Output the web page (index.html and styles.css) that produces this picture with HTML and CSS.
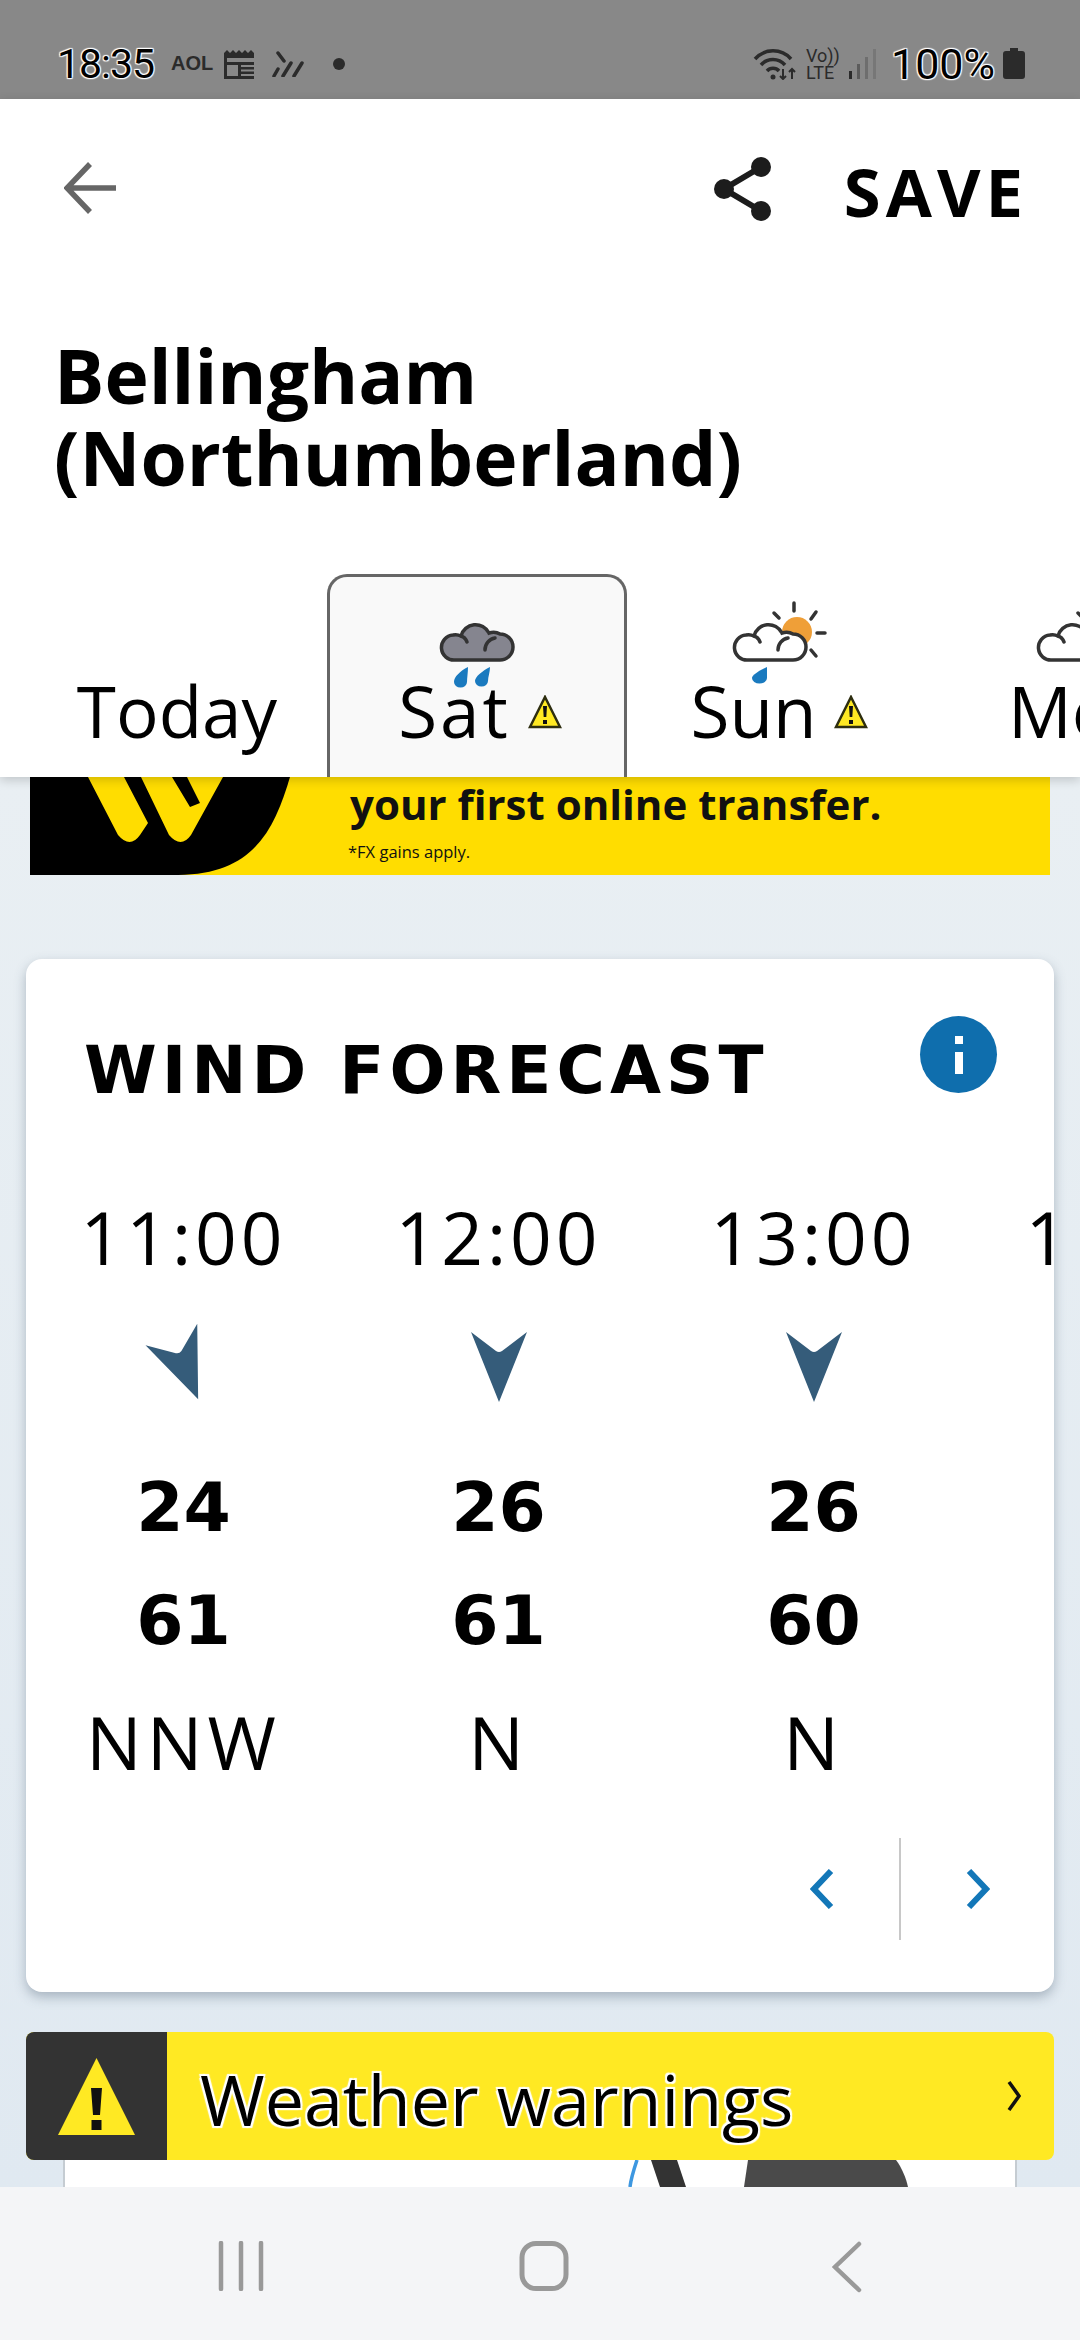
FILE: index.html
```html
<!DOCTYPE html>
<html>
<head>
<title>Wind forecast</title>
<link rel="stylesheet" href="styles.css">
</head>
<body>

<div class="status">
    <div class="status-group">
        <span class="clock">18:35</span>
        <span class="aol">AOL</span>
        <svg class="st-news" viewBox="0 0 33 30"><path d="M0 4 l3-3 3 3 3-3 3 3 3-3 3 3 3-3 3 3 3-3 3 3 V30 H0 Z" fill="#2b2b2b"/><rect x="3" y="9" width="27" height="4" fill="#888"/><rect x="3" y="16" width="11" height="11" fill="#888"/><path d="M17 17h13M17 21.500h13M17 26h13" stroke="#888" stroke-width="2"/></svg>
        <svg class="st-lines" viewBox="0 0 32 26"><path d="M6 2l6 8M2 25l4-7M11 25l8-13M22 25l8-13" stroke="#2b2b2b" stroke-width="3.500" stroke-linecap="round" fill="none"/></svg>
        <span class="st-dot"></span>
    </div>
    <div class="status-group">
        <svg class="st-wifi" viewBox="0 0 44 32"><path d="M2 11a24 24 0 0 1 36 0M8 17a16 16 0 0 1 24 0M14 23a8 8 0 0 1 12 0" stroke="#2b2b2b" stroke-width="3.500" fill="none"/><circle cx="20" cy="29" r="2.500" fill="#2b2b2b"/><path d="M30 21v10M27 28l3 3 3-3M39 31V21M36 24l3-3 3 3" stroke="#2b2b2b" stroke-width="2" fill="none"/></svg>
        <span class="volte">Vo))<br>LTE</span>
        <svg class="st-signal" viewBox="0 0 27 30"><rect x="0" y="22" width="3" height="8" fill="#2b2b2b"/><rect x="8" y="15" width="3" height="15" fill="#5c5c5c"/><rect x="16" y="8" width="3" height="22" fill="#6e6e6e"/><rect x="24" y="0" width="3" height="30" fill="#777"/></svg>
        <span class="battery-pct">100%</span>
        <svg class="st-battery" viewBox="0 0 22 31"><path d="M7 0h8v3h4a3 3 0 0 1 3 3v22a3 3 0 0 1-3 3H3a3 3 0 0 1-3-3V6a3 3 0 0 1 3-3h4z" fill="#2b2b2b"/></svg>
    </div>
</div>

<div class="top">
    <div class="actions">
        <svg class="back" viewBox="0 0 52 52"><path d="M26 2L3 26l23 24M3 26h49" stroke="#666" stroke-width="5.500" fill="none"/></svg>
        <div class="actions-right">
            <svg class="share" viewBox="0 0 58 64"><path d="M47 10L10 32l37 22" stroke="#1c1c1c" stroke-width="6" fill="none"/><circle cx="47" cy="10" r="10" fill="#1c1c1c"/><circle cx="10" cy="32" r="10" fill="#1c1c1c"/><circle cx="47" cy="54" r="10" fill="#1c1c1c"/></svg>
            <span class="save">SAVE</span>
        </div>
    </div>
    <h1 class="place">Bellingham<br>(Northumberland)</h1>
    <div class="tabs">
        <div class="tab tab-today"><span class="tab-label">Today</span></div>
        <div class="tab tab-active">
            <svg class="tab-icon" viewBox="0 0 114 90"><g transform="translate(9 0)"><path d="M26 60A12.500 12.500 0 0 1 24 35Q28 34 32 36A15 15 0 0 1 60 33Q66 31 71 34A13 13 0 0 1 71 60z" fill="#85858f" stroke="#333" stroke-width="3.500"/><path d="M32 36Q36 37 38 42M56 50A12 12 0 0 1 66 38" stroke="#333" stroke-width="3.500" fill="none" stroke-linecap="round"/></g><path d="M48 67C40 71 34 77 34 82a6.500 5.500 0 0 0 13 0C47 78 48 72 48 67zM70 67C62 71 55 77 55 81a6.500 5.500 0 0 0 13 0C68 77 70 72 70 67z" fill="#1a7abf"/></svg>
            <span class="tab-label">Sat</span>
            <svg class="tab-warn" viewBox="0 0 34 34"><path d="M17 2L32 32H2z" fill="#ffe923" stroke="#2e2e10" stroke-width="2.500"/><path d="M15 11h4l-.7 11h-2.600zM15 25h4v4h-4z" fill="#111"/></svg>
        </div>
        <div class="tab tab-sun">
            <svg class="tab-icon" viewBox="0 0 114 90"><circle cx="75" cy="32" r="15" fill="#ef9f38"/><path d="M72 3v8M52 13l5 5M94 12l-5 7M95 33h8M89 50l5 6" stroke="#333" stroke-width="3.500" stroke-linecap="round" fill="none"/><path d="M26 60A12.500 12.500 0 0 1 24 35Q28 34 32 36A15 15 0 0 1 60 33Q66 31 71 34A13 13 0 0 1 71 60z" fill="#fff" stroke="#333" stroke-width="3.500"/><path d="M32 36Q36 37 38 42M56 50A12 12 0 0 1 66 38" stroke="#333" stroke-width="3.500" fill="none" stroke-linecap="round"/><path d="M45 67C36 71 30 75 30 78a7.500 5.500 0 0 0 15 0C45 74 45 71 45 67z" fill="#1a7abf"/></svg>
            <span class="tab-label">Sun</span>
            <svg class="tab-warn" viewBox="0 0 34 34"><path d="M17 2L32 32H2z" fill="#ffe923" stroke="#2e2e10" stroke-width="2.500"/><path d="M15 11h4l-.7 11h-2.600zM15 25h4v4h-4z" fill="#111"/></svg>
        </div>
        <div class="tab tab-mon">
            <svg class="tab-icon" viewBox="0 0 114 90"><path d="M52 13l5 5" stroke="#333" stroke-width="3.500" stroke-linecap="round"/><path d="M26 60A12.500 12.500 0 0 1 24 35Q28 34 32 36A15 15 0 0 1 60 33Q66 31 71 34A13 13 0 0 1 71 60z" fill="#fff" stroke="#333" stroke-width="3.500"/><path d="M32 36Q36 37 38 42M56 50A12 12 0 0 1 66 38" stroke="#333" stroke-width="3.500" fill="none" stroke-linecap="round"/></svg>
            <span class="tab-label">Mon</span>
        </div>
    </div>
</div>

<div class="main">
    <div class="ad">
        <svg class="ad-logo" viewBox="0 0 270 98"><path d="M0 0H260C245 50 225 98 148 98H0z" fill="#000"/><path d="M58 0L88 58Q100 72 110 58L118 46 94 0zM111 0L139 58Q151 72 161 58L193 0H157L170 26 160 30 142 0z" fill="#ffdd00"/></svg>
        <div class="ad-text">
            <div class="ad-headline">your first online transfer.</div>
            <div class="ad-small">*FX gains apply.</div>
        </div>
    </div>

    <div class="card">
        <div class="card-head">
            <h2 class="card-title">WIND FORECAST</h2>
            <div class="info"><span class="info-dot"></span><span class="info-stem"></span></div>
        </div>
        <div class="hours">
            <div class="hour">
                <div class="hour-time">11:00</div>
                <svg class="wind-arrow" viewBox="-40 -45 80 90"><path d="M-28-33L-3-14Q0-12 3-14L28-33 0 37z" transform="rotate(-22.500)" fill="#355c7a"/></svg>
                <div class="hour-num">24</div>
                <div class="hour-num">61</div>
                <div class="hour-dir">NNW</div>
            </div>
            <div class="hour">
                <div class="hour-time">12:00</div>
                <svg class="wind-arrow" viewBox="-40 -45 80 90"><path d="M-28-33L-3-14Q0-12 3-14L28-33 0 37z" fill="#355c7a"/></svg>
                <div class="hour-num">26</div>
                <div class="hour-num">61</div>
                <div class="hour-dir">N</div>
            </div>
            <div class="hour">
                <div class="hour-time">13:00</div>
                <svg class="wind-arrow" viewBox="-40 -45 80 90"><path d="M-28-33L-3-14Q0-12 3-14L28-33 0 37z" fill="#355c7a"/></svg>
                <div class="hour-num">26</div>
                <div class="hour-num">60</div>
                <div class="hour-dir">N</div>
            </div>
            <div class="hour">
                <div class="hour-time">14:00</div>
            </div>
        </div>
        <div class="pager">
            <svg class="pager-btn" viewBox="0 0 24 40"><path d="M21 2L4 20l17 18" stroke="#1377b8" stroke-width="6" fill="none"/></svg>
            <span class="pager-line"></span>
            <svg class="pager-btn" viewBox="0 0 24 40"><path d="M3 2l17 18L3 38" stroke="#1377b8" stroke-width="6" fill="none"/></svg>
        </div>
    </div>

    <div class="warnings">
        <div class="warnings-icon">
            <svg viewBox="0 0 77 77"><path d="M38.500 0L77 77H0z" fill="#ffe923"/><path d="M33 30h11l-2 27h-7zM33.500 62h10v10h-10z" fill="#111"/></svg>
        </div>
        <div class="warnings-text">Weather warnings</div>
        <svg class="warnings-arrow" viewBox="0 0 14 30"><path d="M2 1l10 14L2 29" stroke="#111" stroke-width="3.500" fill="none"/></svg>
    </div>

    <div class="next-card">
        <svg viewBox="0 0 950 27"><path d="M572 0C569 9 566 18 565 27" stroke="#3d97e0" stroke-width="3.500" fill="none"/><path d="M586 0h26l9 27h-26z" fill="#333"/><path d="M683 0h148c6 8 10 18 12 27H679z" fill="#4a4a4a"/></svg>
    </div>
</div>

<div class="navbar">
    <svg class="nav-recent" viewBox="0 0 46 50"><path d="M3 2v46M23 2v46M43 2v46" stroke="#999" stroke-width="4.500" stroke-linecap="round"/></svg>
    <svg class="nav-home" viewBox="0 0 50 50"><rect x="3" y="2.500" width="44" height="45" rx="14" stroke="#999" stroke-width="5" fill="none"/></svg>
    <svg class="nav-back" viewBox="0 0 30 52"><path d="M27 3L3 26l24 23" stroke="#999" stroke-width="4.500" stroke-linecap="round" fill="none"/></svg>
</div>

</body>
</html>
```

FILE: styles.css
```css
* {
    box-sizing: border-box;
}
body {
    margin: 0;
    width: 1080px;
    height: 2340px;
    overflow: hidden;
    display: flex;
    flex-direction: column;
    font-family: "Open Sans", "Noto Sans", sans-serif;
    color: #000;
    background: #e8eef2;
}

/* phone status bar */
.status {
    height: 99px;
    flex: none;
    background: #888;
    display: flex;
    justify-content: space-between;
    align-items: center;
    padding: 28px 55px 0 57px;
}
.status-group {
    display: flex;
    align-items: center;
}
.clock, .battery-pct {
    font-family: Roboto, sans-serif;
    color: #000;
    text-shadow: 0 0 2px #fff, 1px 1px 1px #fff, -1px -1px 1px #fff, 1px -1px 1px #fff, -1px 1px 1px #fff;
}
.clock {
    font-size: 41px;
    letter-spacing: -1px;
}
.battery-pct {
    margin-left: 15px;
    font-size: 43px;
}
.aol {
    margin-left: 17px;
    font-family: "Liberation Sans", sans-serif;
    font-weight: 700;
    font-size: 20px;
    color: #2b2b2b;
}
.st-news {
    width: 33px;
    height: 30px;
    margin-left: 11px;
}
.st-lines {
    width: 32px;
    height: 26px;
    margin-left: 15px;
}
.st-dot {
    width: 12px;
    height: 12px;
    margin-left: 29px;
    border-radius: 50%;
    background: #2b2b2b;
}
.st-wifi {
    width: 44px;
    height: 32px;
}
.volte {
    margin-left: 9px;
    font-family: Roboto, sans-serif;
    font-size: 18px;
    line-height: 17px;
    color: #2b2b2b;
    width: 32px;
}
.st-signal {
    width: 27px;
    height: 30px;
    margin-left: 11px;
}
.st-battery {
    width: 22px;
    height: 31px;
    margin-left: 8px;
}

/* header with title and day tabs */
.top {
    flex: none;
    background: #fff;
    position: relative;
    z-index: 2;
    box-shadow: 0 3px 10px rgba(0, 0, 0, 0.18);
}
.actions {
    height: 178px;
    display: flex;
    justify-content: space-between;
    align-items: center;
    padding: 0 52px 0 64px;
}
.back {
    width: 52px;
    height: 52px;
}
.actions-right {
    display: flex;
    align-items: center;
    gap: 72px;
}
.share {
    width: 58px;
    height: 64px;
    margin-top: 2px;
}
.save {
    margin-top: 6px;
    font-weight: 700;
    font-size: 67px;
    line-height: 1;
    letter-spacing: 5px;
}
.place {
    margin: 57px 0 0;
    padding-left: 54px;
    font-size: 75px;
    line-height: 82px;
    font-weight: 700;
}
.tabs {
    margin-top: 76px;
    height: 203px;
    display: flex;
    align-items: stretch;
    padding-left: 27px;
    overflow: hidden;
}
.tab {
    flex: 0 0 300px;
    position: relative;
    display: flex;
    justify-content: center;
    align-items: flex-end;
    padding-bottom: 18px;
}
.tab-active {
    background: #f9f9f9;
    border: 3px solid #666;
    border-bottom: none;
    border-radius: 20px 20px 0 0;
}
.tab-sun {
    flex-basis: 304px;
}
.tab-mon {
    flex-basis: 304px;
}
.tab-label {
    font-size: 71px;
    line-height: 96px;
}
.tab-active .tab-label {
    margin-left: 6px;
    letter-spacing: 3px;
}
.tab-warn {
    width: 34px;
    height: 34px;
    margin: 0 0 30px 17px;
}
.tab-icon {
    position: absolute;
    top: 26px;
    left: 50%;
    width: 114px;
    height: 90px;
    margin-left: -57px;
}
.tab-active .tab-icon {
    top: 23px;
}

/* scrolled page content */
.main {
    flex: 1;
    min-height: 0;
    overflow: hidden;
    background: linear-gradient(#e9eff3, #e0e9f1);
}
.ad {
    margin: 0 30px;
    height: 98px;
    background: #ffdd00;
    display: flex;
}
.ad-logo {
    width: 270px;
    height: 98px;
    flex: none;
}
.ad-text {
    margin-left: 50px;
}
.ad-headline {
    font-size: 42px;
    line-height: 54px;
    font-weight: 700;
    color: #111;
}
.ad-small {
    margin: 10px 0 0 -2px;
    font-size: 16.500px;
    line-height: 22px;
    color: #111;
}
.card {
    margin: 84px 26px 0;
    height: 1033px;
    background: #fff;
    border-radius: 16px;
    box-shadow: 0 5px 12px rgba(60, 80, 100, 0.35);
    overflow: hidden;
}
.card-head {
    display: flex;
    justify-content: space-between;
    align-items: flex-start;
    padding: 57px 57px 0 58px;
}
.card-title {
    margin: 10px 0 0;
    font-family: "DejaVu Sans", sans-serif;
    font-size: 66px;
    line-height: 90px;
    font-weight: 700;
    letter-spacing: 5px;
}
.info {
    width: 77px;
    height: 77px;
    border-radius: 50%;
    background: #0f6ead;
    display: flex;
    flex-direction: column;
    align-items: center;
    padding-top: 20px;
    gap: 8px;
}
.info-dot {
    width: 8px;
    height: 8px;
    background: #fff;
}
.info-stem {
    width: 8px;
    height: 22px;
    background: #fff;
}
.hours {
    margin-top: 71px;
    display: flex;
    width: 1400px;
}
.hour {
    flex: 0 0 315px;
    text-align: center;
}
.hour-time {
    font-size: 73px;
    line-height: 100px;
    letter-spacing: 4px;
}
.wind-arrow {
    display: block;
    width: 80px;
    height: 90px;
    margin: 33px auto 0;
}
.hour-num {
    font-family: "DejaVu Sans", sans-serif;
    font-size: 68px;
    line-height: 113px;
    font-weight: 700;
}
.wind-arrow + .hour-num {
    margin-top: 41px;
}
.hour-dir {
    font-size: 74px;
    line-height: 100px;
    letter-spacing: 5px;
    margin-top: 15px;
}
.pager {
    margin-top: 46px;
    height: 102px;
    display: flex;
    justify-content: flex-end;
    align-items: center;
    padding-right: 64px;
}
.pager-btn {
    width: 24px;
    height: 40px;
}
.pager-line {
    width: 2px;
    height: 102px;
    background: #c8c8c8;
    margin: 0 65px;
}
.warnings {
    margin: 40px 26px 0;
    height: 128px;
    background: #ffe923;
    border-radius: 8px;
    overflow: hidden;
    display: flex;
    align-items: center;
}
.warnings-icon {
    width: 141px;
    height: 128px;
    flex: none;
    background: #333;
    display: flex;
    align-items: center;
    justify-content: center;
}
.warnings-icon svg {
    width: 77px;
    height: 77px;
}
.warnings-text {
    margin: 5px 0 0 33px;
    flex: 1;
    font-size: 70px;
    line-height: 90px;
    text-shadow: 0 0 2px #fff, 2px 2px 1px #fff, -2px -2px 1px #fff, 2px -2px 1px #fff, -2px 2px 1px #fff;
}
.warnings-arrow {
    width: 14px;
    height: 30px;
    margin-right: 33px;
}
.next-card {
    margin: 0 63px;
    height: 27px;
    background: #fff;
    border-left: 2px solid #c5ccd2;
    border-right: 2px solid #c5ccd2;
}
.next-card svg {
    display: block;
    width: 100%;
    height: 27px;
}

/* phone navigation bar */
.navbar {
    flex: none;
    height: 153px;
    background: #f4f5f7;
    position: relative;
    z-index: 2;
    display: flex;
    align-items: flex-start;
    padding: 54px 0 0 218px;
}
.nav-recent {
    width: 46px;
    height: 50px;
}
.nav-home {
    width: 50px;
    height: 50px;
    margin-left: 255px;
}
.nav-back {
    width: 30px;
    height: 52px;
    margin-left: 263px;
}
```
